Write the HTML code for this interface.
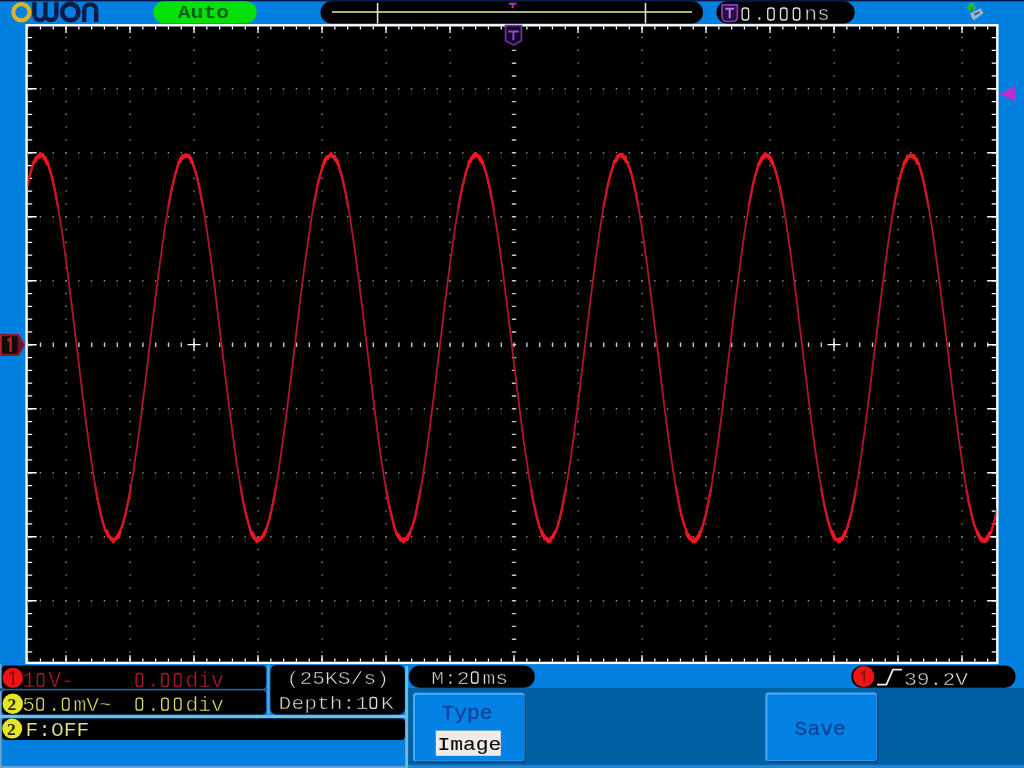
<!DOCTYPE html>
<html><head><meta charset="utf-8"><title>OWON Oscilloscope</title>
<style>html,body{margin:0;padding:0;background:#0280e0;overflow:hidden}svg{display:block}text{font-family:"Liberation Mono", monospace;white-space:pre}</style>
</head><body>
<svg width="1024" height="768" viewBox="0 0 1024 768">
<defs><filter id="b" x="-5%" y="-5%" width="110%" height="110%" color-interpolation-filters="sRGB"><feGaussianBlur stdDeviation="0.45"/></filter><linearGradient id="wg" gradientUnits="userSpaceOnUse" x1="0" y1="152" x2="0" y2="544"><stop offset="0" stop-color="#f0141e"/><stop offset="0.16" stop-color="#b0152b"/><stop offset="0.84" stop-color="#b0152b"/><stop offset="1" stop-color="#f0141e"/></linearGradient><clipPath id="pc"><rect x="27.8" y="26.5" width="968.4" height="635"/></clipPath></defs>
<rect width="1024" height="768" fill="#0280e0"/>
<rect width="1024" height="1.4" fill="#08174a"/>
<g filter="url(#b)">
<rect x="26.6" y="25.3" width="970.7" height="637.6" fill="#000" stroke="#fff" stroke-width="2.4"/>
<g clip-path="url(#pc)">
<line x1="66.0" y1="24.00" x2="66.0" y2="662.9" stroke="#8c8c8c" stroke-width="1.4" stroke-dasharray="1.4 11.40"/>
<line x1="130.0" y1="24.00" x2="130.0" y2="662.9" stroke="#8c8c8c" stroke-width="1.4" stroke-dasharray="1.4 11.40"/>
<line x1="194.0" y1="24.00" x2="194.0" y2="662.9" stroke="#8c8c8c" stroke-width="1.4" stroke-dasharray="1.4 11.40"/>
<line x1="258.0" y1="24.00" x2="258.0" y2="662.9" stroke="#8c8c8c" stroke-width="1.4" stroke-dasharray="1.4 11.40"/>
<line x1="322.0" y1="24.00" x2="322.0" y2="662.9" stroke="#8c8c8c" stroke-width="1.4" stroke-dasharray="1.4 11.40"/>
<line x1="386.0" y1="24.00" x2="386.0" y2="662.9" stroke="#8c8c8c" stroke-width="1.4" stroke-dasharray="1.4 11.40"/>
<line x1="450.0" y1="24.00" x2="450.0" y2="662.9" stroke="#8c8c8c" stroke-width="1.4" stroke-dasharray="1.4 11.40"/>
<line x1="578.0" y1="24.00" x2="578.0" y2="662.9" stroke="#8c8c8c" stroke-width="1.4" stroke-dasharray="1.4 11.40"/>
<line x1="642.0" y1="24.00" x2="642.0" y2="662.9" stroke="#8c8c8c" stroke-width="1.4" stroke-dasharray="1.4 11.40"/>
<line x1="706.0" y1="24.00" x2="706.0" y2="662.9" stroke="#8c8c8c" stroke-width="1.4" stroke-dasharray="1.4 11.40"/>
<line x1="770.0" y1="24.00" x2="770.0" y2="662.9" stroke="#8c8c8c" stroke-width="1.4" stroke-dasharray="1.4 11.40"/>
<line x1="834.0" y1="24.00" x2="834.0" y2="662.9" stroke="#8c8c8c" stroke-width="1.4" stroke-dasharray="1.4 11.40"/>
<line x1="898.0" y1="24.00" x2="898.0" y2="662.9" stroke="#8c8c8c" stroke-width="1.4" stroke-dasharray="1.4 11.40"/>
<line x1="962.0" y1="24.00" x2="962.0" y2="662.9" stroke="#8c8c8c" stroke-width="1.4" stroke-dasharray="1.4 11.40"/>
<line x1="14.10" y1="88.7" x2="997.3" y2="88.7" stroke="#8c8c8c" stroke-width="1.4" stroke-dasharray="1.4 11.40"/>
<line x1="14.10" y1="92.7" x2="997.3" y2="92.7" stroke="#171717" stroke-width="5" stroke-dasharray="1.4 11.40"/>
<line x1="14.10" y1="152.7" x2="997.3" y2="152.7" stroke="#8c8c8c" stroke-width="1.4" stroke-dasharray="1.4 11.40"/>
<line x1="14.10" y1="156.7" x2="997.3" y2="156.7" stroke="#171717" stroke-width="5" stroke-dasharray="1.4 11.40"/>
<line x1="14.10" y1="216.7" x2="997.3" y2="216.7" stroke="#8c8c8c" stroke-width="1.4" stroke-dasharray="1.4 11.40"/>
<line x1="14.10" y1="220.7" x2="997.3" y2="220.7" stroke="#171717" stroke-width="5" stroke-dasharray="1.4 11.40"/>
<line x1="14.10" y1="280.7" x2="997.3" y2="280.7" stroke="#8c8c8c" stroke-width="1.4" stroke-dasharray="1.4 11.40"/>
<line x1="14.10" y1="284.7" x2="997.3" y2="284.7" stroke="#171717" stroke-width="5" stroke-dasharray="1.4 11.40"/>
<line x1="14.10" y1="408.7" x2="997.3" y2="408.7" stroke="#8c8c8c" stroke-width="1.4" stroke-dasharray="1.4 11.40"/>
<line x1="14.10" y1="412.7" x2="997.3" y2="412.7" stroke="#171717" stroke-width="5" stroke-dasharray="1.4 11.40"/>
<line x1="14.10" y1="472.7" x2="997.3" y2="472.7" stroke="#8c8c8c" stroke-width="1.4" stroke-dasharray="1.4 11.40"/>
<line x1="14.10" y1="476.7" x2="997.3" y2="476.7" stroke="#171717" stroke-width="5" stroke-dasharray="1.4 11.40"/>
<line x1="14.10" y1="536.7" x2="997.3" y2="536.7" stroke="#8c8c8c" stroke-width="1.4" stroke-dasharray="1.4 11.40"/>
<line x1="14.10" y1="540.7" x2="997.3" y2="540.7" stroke="#171717" stroke-width="5" stroke-dasharray="1.4 11.40"/>
<line x1="14.10" y1="600.7" x2="997.3" y2="600.7" stroke="#8c8c8c" stroke-width="1.4" stroke-dasharray="1.4 11.40"/>
<line x1="14.10" y1="604.7" x2="997.3" y2="604.7" stroke="#171717" stroke-width="5" stroke-dasharray="1.4 11.40"/>
<line x1="14.20" y1="344.7" x2="997.3" y2="344.7" stroke="#c8c8c8" stroke-width="4.4" stroke-dasharray="1.4 11.40"/>
<line x1="514.0" y1="24.10" x2="514.0" y2="662.9" stroke="#c8c8c8" stroke-width="4.4" stroke-dasharray="1.4 11.40"/>
<line x1="14.20" y1="27.95" x2="997.3" y2="27.95" stroke="#fff" stroke-width="3.3" stroke-dasharray="1.3 11.50"/>
<line x1="65.35" y1="29.65" x2="997.3" y2="29.65" stroke="#fff" stroke-width="6.7" stroke-dasharray="1.4 62.60"/>
<line x1="14.20" y1="660.25" x2="997.3" y2="660.25" stroke="#fff" stroke-width="3.3" stroke-dasharray="1.3 11.50"/>
<line x1="65.35" y1="658.55" x2="997.3" y2="658.55" stroke="#fff" stroke-width="6.7" stroke-dasharray="1.4 62.60"/>
<line x1="29.90" y1="24.10" x2="29.90" y2="662.9" stroke="#fff" stroke-width="4.6" stroke-dasharray="1.3 11.50"/>
<line x1="32.10" y1="24.05" x2="32.10" y2="662.9" stroke="#fff" stroke-width="9.0" stroke-dasharray="1.4 62.60"/>
<line x1="994.00" y1="24.10" x2="994.00" y2="662.9" stroke="#fff" stroke-width="4.6" stroke-dasharray="1.3 11.50"/>
<line x1="991.80" y1="24.05" x2="991.80" y2="662.9" stroke="#fff" stroke-width="9.0" stroke-dasharray="1.4 62.60"/>
<path d="M187.5 344.7h13M194.0 338.2v13" stroke="#fff" stroke-width="1.3" fill="none"/>
<path d="M827.5 344.7h13M834.0 338.2v13" stroke="#fff" stroke-width="1.3" fill="none"/>
<polyline points="27.0,187.1 27.6,184.0 28.3,181.8 28.9,178.5 29.6,176.5 30.2,173.9 30.8,171.3 31.5,169.7 32.1,167.1 32.8,165.6 33.4,162.7 34.0,161.2 34.7,160.9 35.3,160.9 36.0,157.5 36.6,156.8 37.2,157.2 37.9,157.6 38.5,155.8 39.2,154.8 39.8,156.4 40.4,153.4 41.1,156.0 41.7,154.4 42.4,154.2 43.0,154.6 43.6,155.9 44.3,158.3 44.9,157.1 45.6,159.5 46.2,160.9 46.8,161.4 47.5,163.5 48.1,163.5 48.8,166.2 49.4,168.3 50.0,170.9 50.7,172.8 51.3,175.0 52.0,177.8 52.6,180.2 53.2,182.8 53.9,186.2 54.5,189.1 55.2,191.6 55.8,195.2 56.4,198.5 57.1,202.3 57.7,205.7 58.4,208.9 59.0,213.5 59.6,216.3 60.3,220.6 60.9,225.1 61.6,228.6 62.2,233.2 62.8,237.0 63.5,242.2 64.1,246.9 64.8,251.2 65.4,256.2 66.0,260.3 66.7,265.6 67.3,270.3 68.0,275.2 68.6,280.1 69.2,285.6 69.9,290.8 70.5,295.3 71.2,300.7 71.8,305.2 72.4,311.2 73.1,316.4 73.7,322.1 74.4,327.2 75.0,331.9 75.6,337.3 76.3,343.0 76.9,347.6 77.6,353.5 78.2,358.5 78.8,363.7 79.5,369.0 80.1,375.2 80.8,379.7 81.4,385.1 82.0,390.5 82.7,396.3 83.3,400.5 84.0,406.0 84.6,411.2 85.2,416.7 85.9,421.5 86.5,426.5 87.2,430.7 87.8,435.6 88.4,440.3 89.1,445.6 89.7,450.2 90.4,453.8 91.0,458.2 91.6,462.6 92.3,466.9 92.9,471.3 93.6,475.5 94.2,479.1 94.8,482.7 95.5,486.9 96.1,490.5 96.8,494.3 97.4,498.2 98.0,501.2 98.7,504.2 99.3,507.4 100.0,510.4 100.6,512.5 101.2,516.2 101.9,518.6 102.5,521.2 103.2,523.4 103.8,525.1 104.4,527.1 105.1,528.7 105.7,531.3 106.4,531.1 107.0,532.6 107.6,534.4 108.3,535.4 108.9,537.1 109.6,537.0 110.2,537.6 110.8,538.7 111.5,539.0 112.1,540.2 112.8,539.3 113.4,542.0 114.0,541.0 114.7,539.3 115.3,539.2 116.0,538.9 116.6,538.2 117.2,536.6 117.9,537.9 118.5,537.2 119.2,534.2 119.8,532.8 120.4,529.9 121.1,528.3 121.7,527.5 122.4,525.4 123.0,523.9 123.6,520.8 124.3,518.2 124.9,516.8 125.6,513.6 126.2,510.4 126.8,507.9 127.5,504.3 128.1,501.7 128.8,498.9 129.4,495.4 130.0,491.7 130.7,487.5 131.3,483.9 132.0,479.8 132.6,476.6 133.2,472.3 133.9,468.5 134.5,463.7 135.2,459.2 135.8,455.6 136.4,451.3 137.1,446.6 137.7,441.9 138.4,437.2 139.0,432.3 139.6,426.8 140.3,422.3 140.9,417.1 141.6,411.7 142.2,406.6 142.8,401.8 143.5,396.6 144.1,392.0 144.8,387.1 145.4,381.2 146.0,376.5 146.7,371.3 147.3,365.9 148.0,359.9 148.6,354.4 149.2,349.0 149.9,343.6 150.5,338.3 151.2,333.5 151.8,328.5 152.4,323.1 153.1,317.4 153.7,312.3 154.4,307.2 155.0,301.2 155.6,296.7 156.3,291.8 156.9,286.6 157.6,281.5 158.2,276.2 158.8,270.9 159.5,266.7 160.1,261.4 160.8,257.2 161.4,252.7 162.0,247.4 162.7,242.9 163.3,239.1 164.0,234.5 164.6,229.5 165.2,225.3 165.9,221.2 166.5,218.1 167.2,214.1 167.8,209.5 168.4,206.6 169.1,203.2 169.7,199.4 170.4,195.7 171.0,192.7 171.6,189.0 172.3,185.9 172.9,184.2 173.6,181.0 174.2,178.3 174.8,176.3 175.5,173.3 176.1,171.6 176.8,169.5 177.4,166.8 178.0,164.5 178.7,163.0 179.3,161.3 180.0,161.0 180.6,158.7 181.2,158.1 181.9,156.3 182.5,157.9 183.2,155.5 183.8,155.3 184.4,155.4 185.1,156.2 185.7,154.5 186.4,156.2 187.0,155.1 187.6,155.6 188.3,156.1 188.9,155.1 189.6,157.3 190.2,157.4 190.8,158.0 191.5,161.8 192.1,161.2 192.8,163.7 193.4,166.1 194.0,167.3 194.7,169.0 195.3,171.3 196.0,173.6 196.6,176.2 197.2,177.9 197.9,181.1 198.5,183.5 199.2,186.4 199.8,190.0 200.4,192.8 201.1,196.1 201.7,199.7 202.4,203.4 203.0,206.4 203.6,210.3 204.3,214.0 204.9,217.9 205.6,222.1 206.2,225.9 206.8,230.2 207.5,234.4 208.1,239.4 208.8,243.5 209.4,248.3 210.0,253.0 210.7,256.8 211.3,261.9 212.0,267.2 212.6,272.0 213.2,276.1 213.9,281.1 214.5,286.5 215.2,291.2 215.8,296.5 216.4,301.5 217.1,307.4 217.7,312.8 218.4,318.2 219.0,322.6 219.6,328.6 220.3,333.8 220.9,338.6 221.6,344.8 222.2,350.2 222.8,354.7 223.5,360.9 224.1,365.6 224.8,371.0 225.4,376.9 226.0,382.0 226.7,386.4 227.3,392.0 228.0,397.3 228.6,402.2 229.2,407.2 229.9,412.4 230.5,417.9 231.2,422.0 231.8,427.5 232.4,432.2 233.1,436.5 233.7,441.6 234.4,446.6 235.0,451.0 235.6,454.9 236.3,460.4 236.9,464.5 237.6,469.0 238.2,472.0 238.8,476.3 239.5,479.9 240.1,484.7 240.8,487.8 241.4,491.2 242.0,495.1 242.7,499.1 243.3,502.2 244.0,504.7 244.6,507.6 245.2,511.5 245.9,513.9 246.5,516.7 247.2,518.5 247.8,520.8 248.4,523.9 249.1,525.7 249.7,527.3 250.4,531.0 251.0,531.8 251.6,533.9 252.3,533.1 252.9,536.8 253.6,535.4 254.2,539.0 254.8,538.6 255.5,538.9 256.1,540.1 256.8,541.8 257.4,539.9 258.0,539.6 258.7,540.9 259.3,539.8 260.0,539.0 260.6,538.7 261.2,537.7 261.9,537.5 262.5,536.9 263.2,535.8 263.8,536.1 264.4,533.2 265.1,532.4 265.7,529.8 266.4,528.8 267.0,526.5 267.6,524.8 268.3,522.3 268.9,520.8 269.6,518.2 270.2,515.2 270.8,512.8 271.5,510.5 272.1,506.6 272.8,504.3 273.4,500.7 274.0,497.4 274.7,494.4 275.3,490.3 276.0,486.8 276.6,483.2 277.2,479.7 277.9,475.0 278.5,471.5 279.2,467.2 279.8,462.9 280.4,458.2 281.1,453.7 281.7,448.9 282.4,444.4 283.0,439.7 283.6,435.7 284.3,430.3 284.9,425.4 285.6,420.4 286.2,416.3 286.8,411.3 287.5,406.0 288.1,400.4 288.8,395.2 289.4,390.0 290.0,385.0 290.7,379.4 291.3,374.4 292.0,368.9 292.6,364.4 293.2,359.1 293.9,353.2 294.5,347.5 295.2,343.1 295.8,336.9 296.4,331.6 297.1,325.9 297.7,321.0 298.4,315.9 299.0,310.6 299.6,305.0 300.3,300.2 300.9,294.4 301.6,289.6 302.2,284.3 302.8,279.7 303.5,274.3 304.1,269.3 304.8,264.8 305.4,259.9 306.0,255.6 306.7,250.9 307.3,246.6 308.0,241.9 308.6,237.6 309.2,233.4 309.9,228.6 310.5,224.3 311.2,221.1 311.8,216.1 312.4,212.9 313.1,209.1 313.7,204.7 314.4,202.1 315.0,198.7 315.6,195.1 316.3,192.0 316.9,189.0 317.6,185.2 318.2,182.9 318.8,180.1 319.5,177.9 320.1,175.4 320.8,173.1 321.4,170.7 322.0,169.0 322.7,166.8 323.3,165.5 324.0,162.3 324.6,160.2 325.2,159.2 325.9,158.7 326.5,156.8 327.2,158.3 327.8,156.6 328.4,156.2 329.1,155.7 329.7,155.6 330.4,154.8 331.0,153.2 331.6,155.9 332.3,156.0 332.9,155.6 333.6,156.3 334.2,157.4 334.8,156.4 335.5,159.5 336.1,159.1 336.8,159.8 337.4,161.9 338.0,164.9 338.7,165.0 339.3,168.1 340.0,170.4 340.6,171.9 341.2,174.0 341.9,176.6 342.5,179.3 343.2,182.1 343.8,184.7 344.4,187.7 345.1,190.0 345.7,193.3 346.4,196.7 347.0,200.7 347.6,203.6 348.3,207.6 348.9,210.6 349.6,214.5 350.2,218.7 350.8,223.2 351.5,227.4 352.1,231.6 352.8,235.4 353.4,240.1 354.0,244.5 354.7,249.1 355.3,253.3 356.0,258.9 356.6,262.9 357.2,268.6 357.9,273.5 358.5,277.3 359.2,282.9 359.8,288.4 360.4,293.7 361.1,298.2 361.7,303.2 362.4,308.3 363.0,314.5 363.6,318.9 364.3,324.6 364.9,329.4 365.6,335.2 366.2,341.0 366.8,345.4 367.5,351.6 368.1,356.5 368.8,362.3 369.4,367.4 370.0,372.2 370.7,378.3 371.3,383.1 372.0,387.8 372.6,392.9 373.2,398.7 373.9,403.8 374.5,408.7 375.2,413.6 375.8,418.8 376.4,423.7 377.1,429.2 377.7,433.0 378.4,438.7 379.0,443.5 379.6,447.2 380.3,452.8 380.9,457.0 381.6,461.6 382.2,465.1 382.8,469.4 383.5,473.5 384.1,478.3 384.8,481.7 385.4,485.2 386.0,489.0 386.7,492.4 387.3,495.6 388.0,499.0 388.6,503.2 389.2,505.6 389.9,509.4 390.5,511.5 391.2,514.2 391.8,517.2 392.4,519.3 393.1,521.9 393.7,524.8 394.4,526.8 395.0,528.7 395.6,530.6 396.3,533.1 396.9,534.8 397.6,534.9 398.2,536.7 398.8,535.7 399.5,538.8 400.1,538.8 400.8,540.4 401.4,540.6 402.0,539.8 402.7,539.3 403.3,542.2 404.0,539.5 404.6,540.4 405.2,539.7 405.9,539.0 406.5,539.7 407.2,539.7 407.8,536.5 408.4,536.6 409.1,534.3 409.7,533.7 410.4,531.6 411.0,529.2 411.6,528.1 412.3,526.2 412.9,525.0 413.6,522.2 414.2,519.6 414.8,517.9 415.5,515.4 416.1,512.0 416.8,508.7 417.4,505.8 418.0,502.6 418.7,499.6 419.3,496.0 420.0,492.7 420.6,489.1 421.2,485.8 421.9,482.4 422.5,478.3 423.2,473.9 423.8,469.8 424.4,465.8 425.1,461.3 425.7,456.9 426.4,452.1 427.0,447.9 427.6,444.1 428.3,438.4 428.9,434.1 429.6,429.4 430.2,424.8 430.8,419.1 431.5,414.2 432.1,409.1 432.8,404.2 433.4,399.1 434.0,394.6 434.7,389.2 435.3,384.0 436.0,377.7 436.6,372.4 437.2,367.9 437.9,362.8 438.5,357.0 439.2,351.8 439.8,345.7 440.4,340.9 441.1,336.2 441.7,330.7 442.4,325.4 443.0,320.3 443.6,314.1 444.3,308.7 444.9,303.5 445.6,298.8 446.2,293.8 446.8,289.0 447.5,283.7 448.1,278.6 448.8,273.7 449.4,268.5 450.0,263.7 450.7,258.3 451.3,254.5 452.0,249.2 452.6,245.5 453.2,240.7 453.9,235.9 454.5,231.3 455.2,227.2 455.8,223.6 456.4,219.6 457.1,215.0 457.7,211.1 458.4,207.9 459.0,204.3 459.6,200.6 460.3,197.0 460.9,194.1 461.6,190.2 462.2,187.5 462.8,184.8 463.5,182.6 464.1,179.5 464.8,177.3 465.4,174.4 466.0,171.8 466.7,169.7 467.3,168.5 468.0,166.8 468.6,163.7 469.2,161.2 469.9,161.3 470.5,160.6 471.2,158.6 471.8,157.1 472.4,157.5 473.1,157.6 473.7,154.8 474.4,153.7 475.0,154.4 475.6,154.6 476.3,155.4 476.9,154.0 477.6,156.2 478.2,156.5 478.8,156.4 479.5,156.2 480.1,159.5 480.8,158.5 481.4,161.3 482.0,160.7 482.7,162.2 483.3,165.5 484.0,166.2 484.6,168.9 485.2,170.4 485.9,172.2 486.5,174.5 487.2,177.2 487.8,180.1 488.4,183.1 489.1,185.0 489.7,188.2 490.4,191.1 491.0,195.2 491.6,197.5 492.3,200.8 492.9,204.4 493.6,208.4 494.2,212.8 494.8,216.6 495.5,220.4 496.1,224.8 496.8,228.8 497.4,232.4 498.0,236.5 498.7,241.9 499.3,246.1 500.0,249.8 500.6,255.3 501.2,259.6 501.9,264.4 502.5,269.2 503.2,274.0 503.8,278.7 504.4,284.1 505.1,289.3 505.7,295.1 506.4,299.3 507.0,305.5 507.6,309.8 508.3,315.2 508.9,321.1 509.6,326.4 510.2,331.2 510.8,336.1 511.5,342.0 512.1,347.2 512.8,353.2 513.4,357.7 514.0,363.2 514.7,369.2 515.3,373.4 516.0,379.2 516.6,384.9 517.2,390.1 517.9,394.4 518.5,399.6 519.2,404.8 519.8,410.9 520.4,415.1 521.1,420.7 521.7,425.8 522.4,430.0 523.0,434.7 523.6,440.3 524.3,444.5 524.9,448.7 525.6,453.8 526.2,457.7 526.8,462.0 527.5,466.0 528.1,471.0 528.8,475.3 529.4,478.9 530.0,483.2 530.7,485.9 531.3,489.8 532.0,493.6 532.6,497.6 533.2,501.0 533.9,503.5 534.5,506.4 535.2,509.6 535.8,512.6 536.4,515.8 537.1,517.5 537.7,520.7 538.4,523.0 539.0,525.3 539.6,527.3 540.3,529.0 540.9,530.1 541.6,531.7 542.2,533.3 542.8,536.0 543.5,535.0 544.1,536.4 544.8,539.2 545.4,538.3 546.0,538.4 546.7,538.7 547.3,540.7 548.0,540.2 548.6,542.3 549.2,541.9 549.9,542.0 550.5,539.3 551.2,538.1 551.8,537.5 552.4,537.9 553.1,537.6 553.7,535.6 554.4,533.7 555.0,532.8 555.6,531.9 556.3,530.4 556.9,528.3 557.6,526.4 558.2,524.1 558.8,521.1 559.5,519.6 560.1,516.4 560.8,514.1 561.4,511.1 562.0,508.6 562.7,504.9 563.3,501.8 564.0,498.6 564.6,495.1 565.2,492.5 565.9,488.5 566.5,484.5 567.2,480.7 567.8,477.5 568.4,472.9 569.1,468.5 569.7,464.9 570.4,460.4 571.0,456.5 571.6,450.9 572.3,446.8 572.9,442.6 573.6,437.9 574.2,433.2 574.8,427.4 575.5,422.8 576.1,417.6 576.8,412.7 577.4,408.6 578.0,403.0 578.7,398.3 579.3,392.4 580.0,387.8 580.6,382.0 581.2,376.5 581.9,371.8 582.5,366.7 583.2,360.4 583.8,355.6 584.4,350.3 585.1,344.5 585.7,339.3 586.4,333.7 587.0,328.5 587.6,323.2 588.3,318.3 588.9,313.1 589.6,307.3 590.2,301.9 590.8,297.1 591.5,292.4 592.1,286.7 592.8,281.8 593.4,276.6 594.0,272.4 594.7,267.2 595.3,261.8 596.0,257.1 596.6,252.7 597.2,248.3 597.9,243.9 598.5,238.8 599.2,234.5 599.8,230.8 600.4,226.3 601.1,222.0 601.7,218.0 602.4,214.9 603.0,210.3 603.6,206.9 604.3,203.0 604.9,199.6 605.6,196.8 606.2,193.7 606.8,189.8 607.5,186.6 608.1,184.3 608.8,180.9 609.4,178.0 610.0,176.6 610.7,173.7 611.3,171.9 612.0,169.3 612.6,167.9 613.2,165.5 613.9,162.8 614.5,160.8 615.2,161.1 615.8,160.1 616.4,159.9 617.1,156.3 617.7,157.1 618.4,155.6 619.0,155.5 619.6,154.0 620.3,154.2 620.9,154.9 621.6,156.2 622.2,153.8 622.8,155.4 623.5,156.9 624.1,158.1 624.8,156.4 625.4,157.1 626.0,160.8 626.7,162.1 627.3,161.9 628.0,162.1 628.6,166.5 629.2,166.8 629.9,169.4 630.5,171.1 631.2,173.6 631.8,175.1 632.4,178.3 633.1,180.3 633.7,183.2 634.4,186.6 635.0,189.6 635.6,191.9 636.3,195.2 636.9,198.8 637.6,202.4 638.2,205.8 638.8,209.1 639.5,213.1 640.1,217.5 640.8,221.7 641.4,224.8 642.0,229.6 642.7,234.1 643.3,237.6 644.0,243.0 644.6,246.7 645.2,251.8 645.9,256.4 646.5,261.3 647.2,265.7 647.8,270.7 648.4,275.8 649.1,280.7 649.7,286.0 650.4,290.8 651.0,295.9 651.6,300.6 652.3,306.5 652.9,311.6 653.6,316.6 654.2,322.5 654.8,327.8 655.5,332.8 656.1,337.8 656.8,343.5 657.4,348.4 658.0,353.7 658.7,359.5 659.3,364.4 660.0,370.1 660.6,375.5 661.2,380.2 661.9,386.2 662.5,390.8 663.2,396.7 663.8,401.9 664.4,406.7 665.1,411.3 665.7,416.8 666.4,421.6 667.0,427.2 667.6,431.1 668.3,436.8 668.9,441.6 669.6,446.0 670.2,450.6 670.8,454.4 671.5,459.7 672.1,463.5 672.8,468.3 673.4,472.4 674.0,475.5 674.7,480.2 675.3,484.2 676.0,486.9 676.6,490.9 677.2,494.9 677.9,497.6 678.5,501.8 679.2,504.3 679.8,508.0 680.4,510.1 681.1,513.3 681.7,516.5 682.4,518.2 683.0,520.7 683.6,523.3 684.3,525.2 684.9,526.9 685.6,528.3 686.2,530.0 686.8,534.1 687.5,534.7 688.1,536.8 688.8,535.6 689.4,538.6 690.0,537.3 690.7,539.4 691.3,540.3 692.0,539.9 692.6,541.8 693.2,541.0 693.9,541.0 694.5,541.9 695.2,539.1 695.8,541.5 696.4,539.7 697.1,538.2 697.7,538.6 698.4,535.9 699.0,537.0 699.6,534.4 700.3,532.2 700.9,531.9 701.6,529.1 702.2,527.0 702.8,525.7 703.5,522.7 704.1,521.3 704.8,518.2 705.4,516.1 706.0,513.8 706.7,510.5 707.3,507.7 708.0,504.2 708.6,500.6 709.2,497.4 709.9,494.1 710.5,491.1 711.2,487.3 711.8,483.6 712.4,480.2 713.1,475.4 713.7,471.4 714.4,467.8 715.0,462.8 715.6,458.4 716.3,454.4 716.9,449.7 717.6,445.4 718.2,440.6 718.8,436.3 719.5,431.5 720.1,426.2 720.8,421.8 721.4,416.6 722.0,411.2 722.7,407.1 723.3,401.1 724.0,395.9 724.6,390.6 725.2,386.0 725.9,381.1 726.5,375.7 727.2,369.9 727.8,364.4 728.4,358.8 729.1,354.2 729.7,348.8 730.4,343.1 731.0,338.2 731.6,332.6 732.3,327.8 732.9,322.3 733.6,316.4 734.2,311.9 734.8,305.7 735.5,301.0 736.1,295.7 736.8,290.4 737.4,285.1 738.0,280.9 738.7,275.0 739.3,270.7 740.0,266.3 740.6,260.6 741.2,255.9 741.9,251.7 742.5,247.0 743.2,242.6 743.8,238.4 744.4,233.3 745.1,229.2 745.7,225.0 746.4,220.6 747.0,217.6 747.6,213.6 748.3,209.7 748.9,205.2 749.6,202.6 750.2,199.1 750.8,195.4 751.5,192.5 752.1,189.0 752.8,185.8 753.4,182.8 754.0,180.2 754.7,177.4 755.3,175.3 756.0,173.4 756.6,171.1 757.2,169.2 757.9,167.2 758.5,164.4 759.2,163.6 759.8,161.7 760.4,161.5 761.1,159.4 761.7,157.5 762.4,157.8 763.0,158.0 763.6,155.0 764.3,156.6 764.9,153.5 765.6,154.1 766.2,154.0 766.8,155.7 767.5,156.6 768.1,156.3 768.8,155.5 769.4,158.0 770.0,157.1 770.7,157.7 771.3,161.0 772.0,161.4 772.6,163.0 773.2,164.5 773.9,167.2 774.5,167.5 775.2,169.9 775.8,171.8 776.4,174.3 777.1,176.1 777.7,179.0 778.4,181.4 779.0,183.9 779.6,186.7 780.3,190.2 780.9,192.7 781.6,197.0 782.2,199.4 782.8,202.8 783.5,206.5 784.1,211.2 784.8,214.3 785.4,217.9 786.0,221.8 786.7,225.9 787.3,230.9 788.0,235.2 788.6,239.6 789.2,244.1 789.9,247.9 790.5,253.1 791.2,257.5 791.8,262.9 792.4,267.7 793.1,272.7 793.7,276.6 794.4,282.6 795.0,287.7 795.6,292.8 796.3,297.0 796.9,302.3 797.6,307.4 798.2,312.5 798.8,318.8 799.5,324.0 800.1,329.1 800.8,334.7 801.4,339.8 802.0,344.7 802.7,349.9 803.3,355.2 804.0,361.3 804.6,366.0 805.2,371.5 805.9,376.9 806.5,381.7 807.2,387.2 807.8,392.5 808.4,398.2 809.1,402.9 809.7,407.9 810.4,413.8 811.0,418.2 811.6,423.6 812.3,428.2 812.9,432.3 813.6,437.6 814.2,442.3 814.8,447.3 815.5,451.4 816.1,456.3 816.8,460.4 817.4,464.4 818.0,469.3 818.7,472.5 819.3,477.4 820.0,480.6 820.6,484.2 821.2,488.1 821.9,492.4 822.5,496.2 823.2,498.4 823.8,502.2 824.4,505.4 825.1,508.8 825.7,511.0 826.4,514.1 827.0,516.6 827.6,519.7 828.3,521.4 828.9,524.5 829.6,525.8 830.2,527.7 830.8,530.5 831.5,531.6 832.1,531.9 832.8,535.0 833.4,534.5 834.0,537.9 834.7,538.6 835.3,539.7 836.0,539.9 836.6,539.6 837.2,540.1 837.9,540.4 838.5,542.0 839.2,539.4 839.8,541.8 840.4,538.7 841.1,538.8 841.7,538.3 842.4,539.6 843.0,537.4 843.6,535.9 844.3,536.3 844.9,532.9 845.6,532.1 846.2,530.7 846.8,529.1 847.5,527.2 848.1,525.0 848.8,522.4 849.4,520.1 850.0,517.4 850.7,515.6 851.3,512.7 852.0,509.9 852.6,506.2 853.2,503.5 853.9,500.7 854.5,497.1 855.2,493.1 855.8,489.9 856.4,486.8 857.1,482.2 857.7,478.3 858.4,474.4 859.0,470.8 859.6,466.8 860.3,461.7 860.9,457.4 861.6,453.1 862.2,448.6 862.8,444.3 863.5,439.2 864.1,434.6 864.8,429.7 865.4,425.7 866.0,420.5 866.7,414.8 867.3,410.8 868.0,404.7 868.6,399.9 869.2,395.4 869.9,390.0 870.5,384.7 871.2,379.0 871.8,373.5 872.4,368.7 873.1,362.7 873.7,357.5 874.4,352.4 875.0,346.6 875.6,341.7 876.3,336.8 876.9,331.4 877.6,325.8 878.2,320.7 878.8,315.2 879.5,309.5 880.1,304.9 880.8,299.4 881.4,294.7 882.0,289.8 882.7,284.1 883.3,279.3 884.0,274.5 884.6,269.2 885.2,264.1 885.9,259.9 886.5,255.4 887.2,250.6 887.8,245.9 888.4,241.6 889.1,237.0 889.7,232.6 890.4,228.1 891.0,223.8 891.6,220.1 892.3,215.5 892.9,212.1 893.6,208.8 894.2,205.0 894.8,201.4 895.5,197.5 896.1,194.4 896.8,191.3 897.4,188.4 898.0,185.2 898.7,182.7 899.3,180.3 900.0,176.8 900.6,175.0 901.2,172.8 901.9,170.2 902.5,168.3 903.2,167.9 903.8,163.1 904.4,163.1 905.1,160.5 905.7,161.1 906.4,160.4 907.0,158.0 907.6,155.8 908.3,156.6 908.9,155.9 909.6,156.0 910.2,155.0 910.8,155.3 911.5,155.9 912.1,155.0 912.8,155.0 913.4,157.1 914.0,155.3 914.7,157.6 915.3,157.5 916.0,159.7 916.6,158.8 917.2,162.9 917.9,162.4 918.5,163.0 919.2,165.4 919.8,167.9 920.4,169.5 921.1,172.1 921.7,174.4 922.4,177.1 923.0,179.3 923.6,181.8 924.3,184.6 924.9,188.2 925.6,191.5 926.2,194.1 926.8,197.1 927.5,201.2 928.1,204.2 928.8,207.6 929.4,211.3 930.0,215.9 930.7,219.9 931.3,223.7 932.0,227.6 932.6,232.0 933.2,235.9 933.9,241.2 934.5,244.9 935.2,249.9 935.8,254.7 936.4,259.4 937.1,263.8 937.7,268.4 938.4,273.6 939.0,278.1 939.6,284.0 940.3,288.5 940.9,294.2 941.6,298.6 942.2,303.9 942.8,309.0 943.5,314.5 944.1,319.5 944.8,324.6 945.4,330.7 946.0,335.6 946.7,340.9 947.3,346.3 948.0,351.8 948.6,357.1 949.2,362.7 949.9,368.1 950.5,373.0 951.2,379.0 951.8,384.2 952.4,388.4 953.1,394.6 953.7,399.8 954.4,404.8 955.0,409.2 955.6,415.0 956.3,419.8 956.9,424.0 957.6,428.8 958.2,434.8 958.8,439.2 959.5,443.4 960.1,447.8 960.8,452.4 961.4,456.9 962.0,461.9 962.7,465.7 963.3,469.7 964.0,474.7 964.6,478.5 965.2,481.7 965.9,486.3 966.5,489.7 967.2,493.4 967.8,496.8 968.4,500.4 969.1,503.5 969.7,506.7 970.4,508.9 971.0,512.4 971.6,514.9 972.3,517.8 972.9,519.9 973.6,522.8 974.2,524.6 974.8,526.3 975.5,528.2 976.1,529.2 976.8,532.0 977.4,532.1 978.0,534.8 978.7,535.0 979.3,537.2 980.0,538.2 980.6,539.1 981.2,540.8 981.9,538.6 982.5,541.6 983.2,540.6 983.8,541.0 984.4,541.2 985.1,541.6 985.7,539.7 986.4,539.3 987.0,540.4 987.6,536.7 988.3,537.5 988.9,536.4 989.6,533.2 990.2,533.7 990.8,532.4 991.5,531.5 992.1,528.1 992.8,526.9 993.4,524.2 994.0,521.9 994.7,520.1 995.3,516.5 996.0,514.7 996.6,511.8 997.2,508.6" fill="none" stroke="url(#wg)" stroke-width="1.8" stroke-linejoin="round"/>
<polyline points="27.0,187.1 27.6,184.0 28.3,181.8 28.9,178.5 29.6,176.5 30.2,173.9 30.8,171.3 31.5,169.7 32.1,167.1 32.8,165.6 33.4,162.7 34.0,161.2 34.7,160.9 35.3,160.9 36.0,157.5 36.6,156.8 37.2,157.2 37.9,157.6 38.5,155.8 39.2,154.8 39.8,156.4 40.4,153.4 41.1,156.0 41.7,154.4 42.4,154.2 43.0,154.6 43.6,155.9 44.3,158.3 44.9,157.1 45.6,159.5 46.2,160.9 46.8,161.4 47.5,163.5 48.1,163.5 48.8,166.2 49.4,168.3 50.0,170.9 50.7,172.8 51.3,175.0 52.0,177.8 52.6,180.2 53.2,182.8 53.9,186.2 54.5,189.1 55.2,191.6 55.8,195.2 56.4,198.5 57.1,202.3 57.7,205.7" fill="none" stroke="url(#wg)" stroke-width="2.4" stroke-linejoin="round" stroke-linecap="round"/>
<polyline points="95.5,486.9 96.1,490.5 96.8,494.3 97.4,498.2 98.0,501.2 98.7,504.2 99.3,507.4 100.0,510.4 100.6,512.5 101.2,516.2 101.9,518.6 102.5,521.2 103.2,523.4 103.8,525.1 104.4,527.1 105.1,528.7 105.7,531.3 106.4,531.1 107.0,532.6 107.6,534.4 108.3,535.4 108.9,537.1 109.6,537.0 110.2,537.6 110.8,538.7 111.5,539.0 112.1,540.2 112.8,539.3 113.4,542.0 114.0,541.0 114.7,539.3 115.3,539.2 116.0,538.9 116.6,538.2 117.2,536.6 117.9,537.9 118.5,537.2 119.2,534.2 119.8,532.8 120.4,529.9 121.1,528.3 121.7,527.5 122.4,525.4 123.0,523.9 123.6,520.8 124.3,518.2 124.9,516.8 125.6,513.6 126.2,510.4 126.8,507.9 127.5,504.3 128.1,501.7 128.8,498.9 129.4,495.4 130.0,491.7 130.7,487.5" fill="none" stroke="url(#wg)" stroke-width="2.4" stroke-linejoin="round" stroke-linecap="round"/>
<polyline points="168.4,206.6 169.1,203.2 169.7,199.4 170.4,195.7 171.0,192.7 171.6,189.0 172.3,185.9 172.9,184.2 173.6,181.0 174.2,178.3 174.8,176.3 175.5,173.3 176.1,171.6 176.8,169.5 177.4,166.8 178.0,164.5 178.7,163.0 179.3,161.3 180.0,161.0 180.6,158.7 181.2,158.1 181.9,156.3 182.5,157.9 183.2,155.5 183.8,155.3 184.4,155.4 185.1,156.2 185.7,154.5 186.4,156.2 187.0,155.1 187.6,155.6 188.3,156.1 188.9,155.1 189.6,157.3 190.2,157.4 190.8,158.0 191.5,161.8 192.1,161.2 192.8,163.7 193.4,166.1 194.0,167.3 194.7,169.0 195.3,171.3 196.0,173.6 196.6,176.2 197.2,177.9 197.9,181.1 198.5,183.5 199.2,186.4 199.8,190.0 200.4,192.8 201.1,196.1 201.7,199.7 202.4,203.4 203.0,206.4" fill="none" stroke="url(#wg)" stroke-width="2.4" stroke-linejoin="round" stroke-linecap="round"/>
<polyline points="240.8,487.8 241.4,491.2 242.0,495.1 242.7,499.1 243.3,502.2 244.0,504.7 244.6,507.6 245.2,511.5 245.9,513.9 246.5,516.7 247.2,518.5 247.8,520.8 248.4,523.9 249.1,525.7 249.7,527.3 250.4,531.0 251.0,531.8 251.6,533.9 252.3,533.1 252.9,536.8 253.6,535.4 254.2,539.0 254.8,538.6 255.5,538.9 256.1,540.1 256.8,541.8 257.4,539.9 258.0,539.6 258.7,540.9 259.3,539.8 260.0,539.0 260.6,538.7 261.2,537.7 261.9,537.5 262.5,536.9 263.2,535.8 263.8,536.1 264.4,533.2 265.1,532.4 265.7,529.8 266.4,528.8 267.0,526.5 267.6,524.8 268.3,522.3 268.9,520.8 269.6,518.2 270.2,515.2 270.8,512.8 271.5,510.5 272.1,506.6 272.8,504.3 273.4,500.7 274.0,497.4 274.7,494.4 275.3,490.3 276.0,486.8" fill="none" stroke="url(#wg)" stroke-width="2.4" stroke-linejoin="round" stroke-linecap="round"/>
<polyline points="313.7,204.7 314.4,202.1 315.0,198.7 315.6,195.1 316.3,192.0 316.9,189.0 317.6,185.2 318.2,182.9 318.8,180.1 319.5,177.9 320.1,175.4 320.8,173.1 321.4,170.7 322.0,169.0 322.7,166.8 323.3,165.5 324.0,162.3 324.6,160.2 325.2,159.2 325.9,158.7 326.5,156.8 327.2,158.3 327.8,156.6 328.4,156.2 329.1,155.7 329.7,155.6 330.4,154.8 331.0,153.2 331.6,155.9 332.3,156.0 332.9,155.6 333.6,156.3 334.2,157.4 334.8,156.4 335.5,159.5 336.1,159.1 336.8,159.8 337.4,161.9 338.0,164.9 338.7,165.0 339.3,168.1 340.0,170.4 340.6,171.9 341.2,174.0 341.9,176.6 342.5,179.3 343.2,182.1 343.8,184.7 344.4,187.7 345.1,190.0 345.7,193.3 346.4,196.7 347.0,200.7 347.6,203.6 348.3,207.6" fill="none" stroke="url(#wg)" stroke-width="2.4" stroke-linejoin="round" stroke-linecap="round"/>
<polyline points="386.0,489.0 386.7,492.4 387.3,495.6 388.0,499.0 388.6,503.2 389.2,505.6 389.9,509.4 390.5,511.5 391.2,514.2 391.8,517.2 392.4,519.3 393.1,521.9 393.7,524.8 394.4,526.8 395.0,528.7 395.6,530.6 396.3,533.1 396.9,534.8 397.6,534.9 398.2,536.7 398.8,535.7 399.5,538.8 400.1,538.8 400.8,540.4 401.4,540.6 402.0,539.8 402.7,539.3 403.3,542.2 404.0,539.5 404.6,540.4 405.2,539.7 405.9,539.0 406.5,539.7 407.2,539.7 407.8,536.5 408.4,536.6 409.1,534.3 409.7,533.7 410.4,531.6 411.0,529.2 411.6,528.1 412.3,526.2 412.9,525.0 413.6,522.2 414.2,519.6 414.8,517.9 415.5,515.4 416.1,512.0 416.8,508.7 417.4,505.8 418.0,502.6 418.7,499.6 419.3,496.0 420.0,492.7 420.6,489.1" fill="none" stroke="url(#wg)" stroke-width="2.4" stroke-linejoin="round" stroke-linecap="round"/>
<polyline points="458.4,207.9 459.0,204.3 459.6,200.6 460.3,197.0 460.9,194.1 461.6,190.2 462.2,187.5 462.8,184.8 463.5,182.6 464.1,179.5 464.8,177.3 465.4,174.4 466.0,171.8 466.7,169.7 467.3,168.5 468.0,166.8 468.6,163.7 469.2,161.2 469.9,161.3 470.5,160.6 471.2,158.6 471.8,157.1 472.4,157.5 473.1,157.6 473.7,154.8 474.4,153.7 475.0,154.4 475.6,154.6 476.3,155.4 476.9,154.0 477.6,156.2 478.2,156.5 478.8,156.4 479.5,156.2 480.1,159.5 480.8,158.5 481.4,161.3 482.0,160.7 482.7,162.2 483.3,165.5 484.0,166.2 484.6,168.9 485.2,170.4 485.9,172.2 486.5,174.5 487.2,177.2 487.8,180.1 488.4,183.1 489.1,185.0 489.7,188.2 490.4,191.1 491.0,195.2 491.6,197.5 492.3,200.8 492.9,204.4 493.6,208.4" fill="none" stroke="url(#wg)" stroke-width="2.4" stroke-linejoin="round" stroke-linecap="round"/>
<polyline points="531.3,489.8 532.0,493.6 532.6,497.6 533.2,501.0 533.9,503.5 534.5,506.4 535.2,509.6 535.8,512.6 536.4,515.8 537.1,517.5 537.7,520.7 538.4,523.0 539.0,525.3 539.6,527.3 540.3,529.0 540.9,530.1 541.6,531.7 542.2,533.3 542.8,536.0 543.5,535.0 544.1,536.4 544.8,539.2 545.4,538.3 546.0,538.4 546.7,538.7 547.3,540.7 548.0,540.2 548.6,542.3 549.2,541.9 549.9,542.0 550.5,539.3 551.2,538.1 551.8,537.5 552.4,537.9 553.1,537.6 553.7,535.6 554.4,533.7 555.0,532.8 555.6,531.9 556.3,530.4 556.9,528.3 557.6,526.4 558.2,524.1 558.8,521.1 559.5,519.6 560.1,516.4 560.8,514.1 561.4,511.1 562.0,508.6 562.7,504.9 563.3,501.8 564.0,498.6 564.6,495.1 565.2,492.5 565.9,488.5" fill="none" stroke="url(#wg)" stroke-width="2.4" stroke-linejoin="round" stroke-linecap="round"/>
<polyline points="603.6,206.9 604.3,203.0 604.9,199.6 605.6,196.8 606.2,193.7 606.8,189.8 607.5,186.6 608.1,184.3 608.8,180.9 609.4,178.0 610.0,176.6 610.7,173.7 611.3,171.9 612.0,169.3 612.6,167.9 613.2,165.5 613.9,162.8 614.5,160.8 615.2,161.1 615.8,160.1 616.4,159.9 617.1,156.3 617.7,157.1 618.4,155.6 619.0,155.5 619.6,154.0 620.3,154.2 620.9,154.9 621.6,156.2 622.2,153.8 622.8,155.4 623.5,156.9 624.1,158.1 624.8,156.4 625.4,157.1 626.0,160.8 626.7,162.1 627.3,161.9 628.0,162.1 628.6,166.5 629.2,166.8 629.9,169.4 630.5,171.1 631.2,173.6 631.8,175.1 632.4,178.3 633.1,180.3 633.7,183.2 634.4,186.6 635.0,189.6 635.6,191.9 636.3,195.2 636.9,198.8 637.6,202.4 638.2,205.8" fill="none" stroke="url(#wg)" stroke-width="2.4" stroke-linejoin="round" stroke-linecap="round"/>
<polyline points="676.0,486.9 676.6,490.9 677.2,494.9 677.9,497.6 678.5,501.8 679.2,504.3 679.8,508.0 680.4,510.1 681.1,513.3 681.7,516.5 682.4,518.2 683.0,520.7 683.6,523.3 684.3,525.2 684.9,526.9 685.6,528.3 686.2,530.0 686.8,534.1 687.5,534.7 688.1,536.8 688.8,535.6 689.4,538.6 690.0,537.3 690.7,539.4 691.3,540.3 692.0,539.9 692.6,541.8 693.2,541.0 693.9,541.0 694.5,541.9 695.2,539.1 695.8,541.5 696.4,539.7 697.1,538.2 697.7,538.6 698.4,535.9 699.0,537.0 699.6,534.4 700.3,532.2 700.9,531.9 701.6,529.1 702.2,527.0 702.8,525.7 703.5,522.7 704.1,521.3 704.8,518.2 705.4,516.1 706.0,513.8 706.7,510.5 707.3,507.7 708.0,504.2 708.6,500.6 709.2,497.4 709.9,494.1 710.5,491.1 711.2,487.3" fill="none" stroke="url(#wg)" stroke-width="2.4" stroke-linejoin="round" stroke-linecap="round"/>
<polyline points="748.9,205.2 749.6,202.6 750.2,199.1 750.8,195.4 751.5,192.5 752.1,189.0 752.8,185.8 753.4,182.8 754.0,180.2 754.7,177.4 755.3,175.3 756.0,173.4 756.6,171.1 757.2,169.2 757.9,167.2 758.5,164.4 759.2,163.6 759.8,161.7 760.4,161.5 761.1,159.4 761.7,157.5 762.4,157.8 763.0,158.0 763.6,155.0 764.3,156.6 764.9,153.5 765.6,154.1 766.2,154.0 766.8,155.7 767.5,156.6 768.1,156.3 768.8,155.5 769.4,158.0 770.0,157.1 770.7,157.7 771.3,161.0 772.0,161.4 772.6,163.0 773.2,164.5 773.9,167.2 774.5,167.5 775.2,169.9 775.8,171.8 776.4,174.3 777.1,176.1 777.7,179.0 778.4,181.4 779.0,183.9 779.6,186.7 780.3,190.2 780.9,192.7 781.6,197.0 782.2,199.4 782.8,202.8 783.5,206.5" fill="none" stroke="url(#wg)" stroke-width="2.4" stroke-linejoin="round" stroke-linecap="round"/>
<polyline points="821.2,488.1 821.9,492.4 822.5,496.2 823.2,498.4 823.8,502.2 824.4,505.4 825.1,508.8 825.7,511.0 826.4,514.1 827.0,516.6 827.6,519.7 828.3,521.4 828.9,524.5 829.6,525.8 830.2,527.7 830.8,530.5 831.5,531.6 832.1,531.9 832.8,535.0 833.4,534.5 834.0,537.9 834.7,538.6 835.3,539.7 836.0,539.9 836.6,539.6 837.2,540.1 837.9,540.4 838.5,542.0 839.2,539.4 839.8,541.8 840.4,538.7 841.1,538.8 841.7,538.3 842.4,539.6 843.0,537.4 843.6,535.9 844.3,536.3 844.9,532.9 845.6,532.1 846.2,530.7 846.8,529.1 847.5,527.2 848.1,525.0 848.8,522.4 849.4,520.1 850.0,517.4 850.7,515.6 851.3,512.7 852.0,509.9 852.6,506.2 853.2,503.5 853.9,500.7 854.5,497.1 855.2,493.1 855.8,489.9" fill="none" stroke="url(#wg)" stroke-width="2.4" stroke-linejoin="round" stroke-linecap="round"/>
<polyline points="893.6,208.8 894.2,205.0 894.8,201.4 895.5,197.5 896.1,194.4 896.8,191.3 897.4,188.4 898.0,185.2 898.7,182.7 899.3,180.3 900.0,176.8 900.6,175.0 901.2,172.8 901.9,170.2 902.5,168.3 903.2,167.9 903.8,163.1 904.4,163.1 905.1,160.5 905.7,161.1 906.4,160.4 907.0,158.0 907.6,155.8 908.3,156.6 908.9,155.9 909.6,156.0 910.2,155.0 910.8,155.3 911.5,155.9 912.1,155.0 912.8,155.0 913.4,157.1 914.0,155.3 914.7,157.6 915.3,157.5 916.0,159.7 916.6,158.8 917.2,162.9 917.9,162.4 918.5,163.0 919.2,165.4 919.8,167.9 920.4,169.5 921.1,172.1 921.7,174.4 922.4,177.1 923.0,179.3 923.6,181.8 924.3,184.6 924.9,188.2 925.6,191.5 926.2,194.1 926.8,197.1 927.5,201.2 928.1,204.2 928.8,207.6" fill="none" stroke="url(#wg)" stroke-width="2.4" stroke-linejoin="round" stroke-linecap="round"/>
<polyline points="966.5,489.7 967.2,493.4 967.8,496.8 968.4,500.4 969.1,503.5 969.7,506.7 970.4,508.9 971.0,512.4 971.6,514.9 972.3,517.8 972.9,519.9 973.6,522.8 974.2,524.6 974.8,526.3 975.5,528.2 976.1,529.2 976.8,532.0 977.4,532.1 978.0,534.8 978.7,535.0 979.3,537.2 980.0,538.2 980.6,539.1 981.2,540.8 981.9,538.6 982.5,541.6 983.2,540.6 983.8,541.0 984.4,541.2 985.1,541.6 985.7,539.7 986.4,539.3 987.0,540.4 987.6,536.7 988.3,537.5 988.9,536.4 989.6,533.2 990.2,533.7 990.8,532.4 991.5,531.5 992.1,528.1 992.8,526.9 993.4,524.2 994.0,521.9 994.7,520.1 995.3,516.5 996.0,514.7 996.6,511.8 997.2,508.6" fill="none" stroke="url(#wg)" stroke-width="2.4" stroke-linejoin="round" stroke-linecap="round"/>
<polyline points="34.0,162.0 34.7,161.4 35.3,161.2 36.0,158.2 36.6,157.5 37.2,157.7 37.9,157.8 38.5,156.3 39.2,155.4 39.8,156.6 40.4,154.1 41.1,156.3 41.7,155.0 42.4,154.9 43.0,155.4 43.6,156.5 44.3,158.6 44.9,157.8 45.6,159.9 46.2,161.3 46.8,162.0 47.5,163.9" fill="none" stroke="#ee1620" stroke-width="3.4" stroke-linejoin="round" stroke-linecap="round"/>
<polyline points="106.4,530.9 107.0,532.4 107.6,534.1 108.3,535.2 108.9,536.7 109.6,536.8 110.2,537.4 110.8,538.4 111.5,538.8 112.1,539.8 112.8,539.1 113.4,541.2 114.0,540.4 114.7,539.0 115.3,538.8 116.0,538.5 116.6,537.8 117.2,536.3 117.9,537.2 118.5,536.4 119.2,533.7 119.8,532.3" fill="none" stroke="#ee1620" stroke-width="3.4" stroke-linejoin="round" stroke-linecap="round"/>
<polyline points="179.3,162.0 180.0,161.5 180.6,159.4 181.2,158.7 181.9,157.0 182.5,158.2 183.2,156.1 183.8,155.8 184.4,155.8 185.1,156.4 185.7,155.1 186.4,156.4 187.0,155.6 187.6,156.1 188.3,156.6 188.9,155.9 189.6,157.8 190.2,158.1 190.8,158.8 191.5,162.1 192.1,161.9" fill="none" stroke="#ee1620" stroke-width="3.4" stroke-linejoin="round" stroke-linecap="round"/>
<polyline points="251.6,533.2 252.3,532.8 252.9,536.1 253.6,535.2 254.2,538.3 254.8,538.1 255.5,538.5 256.1,539.6 256.8,541.0 257.4,539.6 258.0,539.3 258.7,540.3 259.3,539.4 260.0,538.8 260.6,538.4 261.2,537.5 261.9,537.2 262.5,536.5 263.2,535.5 263.8,535.4 264.4,532.9 265.1,531.9" fill="none" stroke="#ee1620" stroke-width="3.4" stroke-linejoin="round" stroke-linecap="round"/>
<polyline points="324.0,163.0 324.6,161.0 325.2,159.9 325.9,159.3 326.5,157.6 327.2,158.6 327.8,157.1 328.4,156.6 329.1,156.2 329.7,156.0 330.4,155.3 331.0,154.0 331.6,156.2 332.3,156.3 332.9,156.1 333.6,156.8 334.2,157.8 334.8,157.1 335.5,159.9 336.1,159.8 336.8,160.6 337.4,162.5" fill="none" stroke="#ee1620" stroke-width="3.4" stroke-linejoin="round" stroke-linecap="round"/>
<polyline points="396.9,534.0 397.6,534.4 398.2,536.1 398.8,535.5 399.5,538.2 400.1,538.3 400.8,539.7 401.4,540.0 402.0,539.4 402.7,539.1 403.3,541.4 404.0,539.3 404.6,539.9 405.2,539.3 405.9,538.6 406.5,539.1 407.2,538.9 407.8,536.1 408.4,536.0 409.1,533.9 409.7,533.2" fill="none" stroke="#ee1620" stroke-width="3.4" stroke-linejoin="round" stroke-linecap="round"/>
<polyline points="469.2,162.0 469.9,161.8 470.5,161.0 471.2,159.1 471.8,157.7 472.4,157.9 473.1,157.8 473.7,155.5 474.4,154.5 475.0,155.0 475.6,155.1 476.3,155.8 476.9,154.7 477.6,156.6 478.2,156.9 478.8,156.9 479.5,156.9 480.1,159.7 480.8,159.1 481.4,161.6 482.0,161.4 482.7,162.8" fill="none" stroke="#ee1620" stroke-width="3.4" stroke-linejoin="round" stroke-linecap="round"/>
<polyline points="541.6,531.3 542.2,532.9 542.8,535.4 543.5,534.8 544.1,536.1 544.8,538.5 545.4,538.0 546.0,538.1 546.7,538.5 547.3,540.2 548.0,539.8 548.6,541.5 549.2,541.2 549.9,541.2 550.5,538.9 551.2,537.9 551.8,537.2 552.4,537.4 553.1,537.0 553.7,535.2 554.4,533.3 555.0,532.4" fill="none" stroke="#ee1620" stroke-width="3.4" stroke-linejoin="round" stroke-linecap="round"/>
<polyline points="614.5,161.6 615.2,161.6 615.8,160.5 616.4,160.1 617.1,157.0 617.7,157.6 618.4,156.2 619.0,156.0 619.6,154.7 620.3,154.8 620.9,155.4 621.6,156.4 622.2,154.6 622.8,155.9 623.5,157.2 624.1,158.3 624.8,157.1 625.4,157.8 626.0,161.0 626.7,162.3 627.3,162.4" fill="none" stroke="#ee1620" stroke-width="3.4" stroke-linejoin="round" stroke-linecap="round"/>
<polyline points="686.8,533.3 687.5,534.1 688.1,536.0 688.8,535.3 689.4,537.9 690.0,537.1 690.7,538.9 691.3,539.7 692.0,539.5 692.6,541.1 693.2,540.4 693.9,540.5 694.5,541.1 695.2,538.8 695.8,540.6 696.4,539.1 697.1,537.8 697.7,537.9 698.4,535.5 699.0,536.2 699.6,533.8 700.3,531.8" fill="none" stroke="#ee1620" stroke-width="3.4" stroke-linejoin="round" stroke-linecap="round"/>
<polyline points="759.2,164.1 759.8,162.3 760.4,161.8 761.1,159.9 761.7,158.2 762.4,158.2 763.0,158.2 763.6,155.7 764.3,156.9 764.9,154.3 765.6,154.7 766.2,154.6 766.8,156.0 767.5,156.8 768.1,156.7 768.8,156.1 769.4,158.2 770.0,157.7 770.7,158.4 771.3,161.3 772.0,161.8 772.6,163.4" fill="none" stroke="#ee1620" stroke-width="3.4" stroke-linejoin="round" stroke-linecap="round"/>
<polyline points="832.1,531.6 832.8,534.4 833.4,534.3 834.0,537.2 834.7,538.0 835.3,539.0 836.0,539.3 836.6,539.2 837.2,539.7 837.9,539.9 838.5,541.3 839.2,539.2 839.8,541.1 840.4,538.5 841.1,538.5 841.7,538.0 842.4,538.8 843.0,536.9 843.6,535.5 844.3,535.6 844.9,532.5 845.6,531.6" fill="none" stroke="#ee1620" stroke-width="3.4" stroke-linejoin="round" stroke-linecap="round"/>
<polyline points="904.4,163.6 905.1,161.2 905.7,161.4 906.4,160.7 907.0,158.5 907.6,156.6 908.3,157.0 908.9,156.3 909.6,156.3 910.2,155.5 910.8,155.7 911.5,156.2 912.1,155.5 912.8,155.5 913.4,157.3 914.0,156.0 914.7,158.0 915.3,158.1 916.0,160.1 916.6,159.6 917.2,163.1 917.9,162.9" fill="none" stroke="#ee1620" stroke-width="3.4" stroke-linejoin="round" stroke-linecap="round"/>
<polyline points="977.4,531.9 978.0,534.3 978.7,534.8 979.3,536.7 980.0,537.7 980.6,538.6 981.2,540.1 981.9,538.4 982.5,540.9 983.2,540.2 983.8,540.5 984.4,540.6 985.1,540.9 985.7,539.3 986.4,538.9 987.0,539.6 987.6,536.5 988.3,536.9 988.9,535.8 989.6,533.0 990.2,533.1" fill="none" stroke="#ee1620" stroke-width="3.4" stroke-linejoin="round" stroke-linecap="round"/>
</g>
</g>
<!--TOP-->
<g filter="url(#b)">
<circle cx="21.4" cy="12.2" r="8.1" fill="none" stroke="#d8b42c" stroke-width="4.2"/>
<g fill="none" stroke="#0a1c46" stroke-width="4.4" stroke-linecap="butt">
<path d="M34.4 2.3V14.6a5.5 5.5 0 0 0 11 0V2.3M45.4 14.6a5.5 5.5 0 0 0 11 0V2.3"/>
<circle cx="70.3" cy="12.1" r="8.2" stroke-width="4.6"/>
<path d="M84.2 22V10.4a6 6 0 0 1 12 0V22"/>
</g>
<rect x="153.3" y="1.3" width="103.4" height="22" rx="11" fill="#06e00a"/>
<text x="177.8" y="18.2" fill="#0a6214" font-size="18.2" textLength="51.2" lengthAdjust="spacingAndGlyphs" font-weight="bold">Auto</text>
<rect x="320.5" y="1.3" width="382.5" height="22.2" rx="11.1" fill="#000"/>
<line x1="332" y1="12" x2="692" y2="12" stroke="#b0b074" stroke-width="2"/>
<path d="M377.6 3V23.5M645.5 3V23.5" stroke="#e0e0e0" stroke-width="1.6" fill="none"/>
<path d="M508.8 3.7H516.2M512.6 3.7V8.2" stroke="#aa38ae" stroke-width="2" fill="none"/>
<rect x="716.4" y="1.3" width="138.3" height="22.2" rx="11.1" fill="#000"/>
<path d="M722 4.8H737.4V17a4.5 4.5 0 0 1 -4.5 4.5H726.5a4.5 4.5 0 0 1 -4.5 -4.5Z" fill="#2c0c48" stroke="#8a3cb4" stroke-width="1.7"/>
<path d="M725.3 8.8H734.1M729.7 8.8V18.2" stroke="#b080e0" stroke-width="2" fill="none"/>
<text x="740.2" y="20.4" fill="#e0e0e0" font-size="19.6" textLength="89.6" lengthAdjust="spacingAndGlyphs" stroke="#000" stroke-width="0.50" paint-order="fill stroke"> .   ns</text><rect x="742.1" y="8.0" width="6.5" height="12.0" rx="2.5" fill="none" stroke="#e0e0e0" stroke-width="1.35"/><rect x="767.7" y="8.0" width="6.5" height="12.0" rx="2.5" fill="none" stroke="#e0e0e0" stroke-width="1.35"/><rect x="780.5" y="8.0" width="6.5" height="12.0" rx="2.5" fill="none" stroke="#e0e0e0" stroke-width="1.35"/><rect x="793.3" y="8.0" width="6.5" height="12.0" rx="2.5" fill="none" stroke="#e0e0e0" stroke-width="1.35"/>
<path d="M969.8 13.4L980.6 8.2L983.4 13.2L973.4 20.6Z" fill="#9cb4d0"/>
<path d="M973.6 13.8L979 11.2L980 13L975 15.8Z" fill="#4c6690"/>
<path d="M968.8 3.6h5.2v3.6h2.4l-5 5.2l-5 -5.2h2.4z" fill="#28b83c" stroke="#28b83c" stroke-width="0.8" stroke-linejoin="round"/>
<path d="M971.6 7V11.8" stroke="#0e7a20" stroke-width="1.2"/>
</g>
<!--/TOP-->
<!--MARKERS-->
<g filter="url(#b)">
<path d="M505.6 25.6H521.4V40.6L513.5 45L505.6 40.6Z" fill="#14042a" stroke="#6c2e98" stroke-width="1.8"/>
<path d="M508.2 31.5H518.8M513.4 31.5V40.2" stroke="#8450c4" stroke-width="2" fill="none"/>
<path d="M-1 335.2H18.2L23.8 345L18.2 354.8H-1Z" fill="#0c0c08" stroke="#901432" stroke-width="2.2"/>
<path d="M17.6 336.4L22.8 345L17.6 353.6Z" fill="#741028"/>
<rect x="0" y="335" width="1.8" height="20" fill="#c01c2c"/>
<path d="M7.5 340.5L10.6 338.4V352" stroke="#cc182c" stroke-width="2.4" fill="none"/>
<path d="M999.6 94L1015.4 86V101.6Z" fill="#c02cd0"/>
</g>
<!--/MARKERS-->
<!--BOTTOM-->
<g filter="url(#b)">
<rect x="408" y="688" width="620" height="76.8" fill="#0060a4"/>
<rect x="0" y="765.6" width="1024" height="3" fill="#2a86c8"/>
<rect x="0" y="766.2" width="406" height="2" fill="#6fa4c4"/>
<rect x="0" y="664" width="1.6" height="104" fill="#6fa4c4"/>
<rect x="0" y="715.1" width="406" height="2.8" fill="#8cbcc8"/>
<rect x="0" y="688" width="268" height="3.4" fill="#2a5a8c"/>
<rect x="267.2" y="665" width="2.4" height="51" fill="#4aa6e4"/>
<rect x="405.2" y="666" width="2.9" height="102" fill="#72b8d8"/>
<rect x="1.8" y="665.4" width="264.4" height="23.4" rx="4" fill="#000"/>
<rect x="1.8" y="690.6" width="264.4" height="24" rx="4" fill="#000"/>
<rect x="2" y="718.4" width="403" height="21.6" rx="4" fill="#000"/>
<rect x="270.4" y="665" width="134.4" height="49.6" rx="6" fill="#000"/>
<rect x="408.8" y="665.6" width="126" height="22.2" rx="11.1" fill="#000"/>
<rect x="851.2" y="665.6" width="164.4" height="22.2" rx="11.1" fill="#000"/>
<circle cx="12.8" cy="677.9" r="10.2" fill="#ec1414"/>
<path d="M9.4 674.2L13.2 671.4V685" stroke="#8c0c0c" stroke-width="1.8" fill="none"/>
<text x="22.6" y="687.0" fill="#a81a2a" font-size="21.3" textLength="51.2" lengthAdjust="spacingAndGlyphs" stroke="#000" stroke-width="0.40" paint-order="fill stroke">1 V-</text><rect x="37.3" y="673.5" width="6.5" height="13.1" rx="2.5" fill="none" stroke="#a81a2a" stroke-width="1.35"/>
<text x="134.2" y="687.0" fill="#a81a2a" font-size="21.3" textLength="89.6" lengthAdjust="spacingAndGlyphs" stroke="#000" stroke-width="0.40" paint-order="fill stroke"> .  div</text><rect x="136.1" y="673.5" width="6.5" height="13.1" rx="2.5" fill="none" stroke="#a81a2a" stroke-width="1.35"/><rect x="161.7" y="673.5" width="6.5" height="13.1" rx="2.5" fill="none" stroke="#a81a2a" stroke-width="1.35"/><rect x="174.5" y="673.5" width="6.5" height="13.1" rx="2.5" fill="none" stroke="#a81a2a" stroke-width="1.35"/>
<circle cx="12.8" cy="703.8" r="10.2" fill="#e4e428"/>
<text x="7.6" y="710.2" fill="#2a2a08" font-size="17.5" font-weight="bold" style="font-family:&quot;Liberation Serif&quot;,serif">2</text>
<text x="22.2" y="710.6" fill="#d8d868" font-size="19.8" textLength="89.6" lengthAdjust="spacingAndGlyphs" stroke="#000" stroke-width="0.50" paint-order="fill stroke">5 . mV~</text><rect x="36.9" y="698.1" width="6.5" height="12.1" rx="2.5" fill="none" stroke="#d8d868" stroke-width="1.35"/><rect x="62.5" y="698.1" width="6.5" height="12.1" rx="2.5" fill="none" stroke="#d8d868" stroke-width="1.35"/>
<text x="134.2" y="710.6" fill="#d8d868" font-size="19.8" textLength="89.6" lengthAdjust="spacingAndGlyphs" stroke="#000" stroke-width="0.50" paint-order="fill stroke"> .  div</text><rect x="136.1" y="698.1" width="6.5" height="12.1" rx="2.5" fill="none" stroke="#d8d868" stroke-width="1.35"/><rect x="161.7" y="698.1" width="6.5" height="12.1" rx="2.5" fill="none" stroke="#d8d868" stroke-width="1.35"/><rect x="174.5" y="698.1" width="6.5" height="12.1" rx="2.5" fill="none" stroke="#d8d868" stroke-width="1.35"/>
<circle cx="12.2" cy="728.6" r="10" fill="#e4e428"/>
<text x="7.0" y="734.8" fill="#2a2a08" font-size="17.5" font-weight="bold" style="font-family:&quot;Liberation Serif&quot;,serif">2</text>
<text x="25.4" y="735.8" fill="#dede90" font-size="19.4" textLength="64.0" lengthAdjust="spacingAndGlyphs" stroke="#000" stroke-width="0.15" paint-order="fill stroke">F:OFF</text>
<text x="286.6" y="684.0" fill="#dcdcd4" font-size="18.0" textLength="102.4" lengthAdjust="spacingAndGlyphs" stroke="#000" stroke-width="0.50" paint-order="fill stroke">(25KS/s)</text>
<text x="278.6" y="708.8" fill="#dcdcd4" font-size="18.0" textLength="115.2" lengthAdjust="spacingAndGlyphs" stroke="#000" stroke-width="0.50" paint-order="fill stroke">Depth:1 K</text><rect x="370.1" y="697.4" width="6.5" height="11.0" rx="2.5" fill="none" stroke="#dcdcd4" stroke-width="1.35"/>
<text x="431.2" y="683.6" fill="#dcdcd4" font-size="18.6" textLength="76.8" lengthAdjust="spacingAndGlyphs" stroke="#000" stroke-width="0.50" paint-order="fill stroke">M:2 ms</text><rect x="471.5" y="671.8" width="6.5" height="11.4" rx="2.5" fill="none" stroke="#dcdcd4" stroke-width="1.35"/>
<circle cx="863.8" cy="676.6" r="10.6" fill="#ec1414"/>
<path d="M861 673.6L864.2 671.4V682.6" stroke="#8c0c0c" stroke-width="1.6" fill="none"/>
<path d="M877 684.6H886.4L893 669.6H902" stroke="#ececec" stroke-width="1.8" fill="none"/>
<text x="904.0" y="684.6" fill="#dcdcdc" font-size="18.6" textLength="64.0" lengthAdjust="spacingAndGlyphs" stroke="#000" stroke-width="0.50" paint-order="fill stroke">39.2V</text>
<rect x="415.2" y="695.2" width="110.8" height="67.8" rx="3" fill="#044a8a"/><rect x="413.0" y="692.8" width="111.4" height="68.4" rx="3" fill="#4cacfa"/><rect x="414.9" y="694.7" width="109.1" height="66.1" rx="2" fill="#0482e4"/>
<text x="441.4" y="718.9" fill="#0a449a" font-size="19.4" textLength="51.2" lengthAdjust="spacingAndGlyphs" stroke="#0a449a" stroke-width="0.30">Type</text>
<rect x="435.8" y="730.6" width="65" height="25.2" fill="#f0ebe8"/>
<text x="437.4" y="749.6" fill="#101010" font-size="18.0" textLength="64.0" lengthAdjust="spacingAndGlyphs" stroke="#101010" stroke-width="0.15">Image</text>
<rect x="767.6" y="695.0" width="110.8" height="67.8" rx="3" fill="#044a8a"/><rect x="765.4" y="692.6" width="111.4" height="68.4" rx="3" fill="#4cacfa"/><rect x="767.3" y="694.5" width="109.1" height="66.1" rx="2" fill="#0482e4"/>
<text x="794.6" y="735.0" fill="#0a449a" font-size="19.4" textLength="51.2" lengthAdjust="spacingAndGlyphs" stroke="#0a449a" stroke-width="0.30">Save</text>
</g>
<!--/BOTTOM-->
</svg></body></html>
